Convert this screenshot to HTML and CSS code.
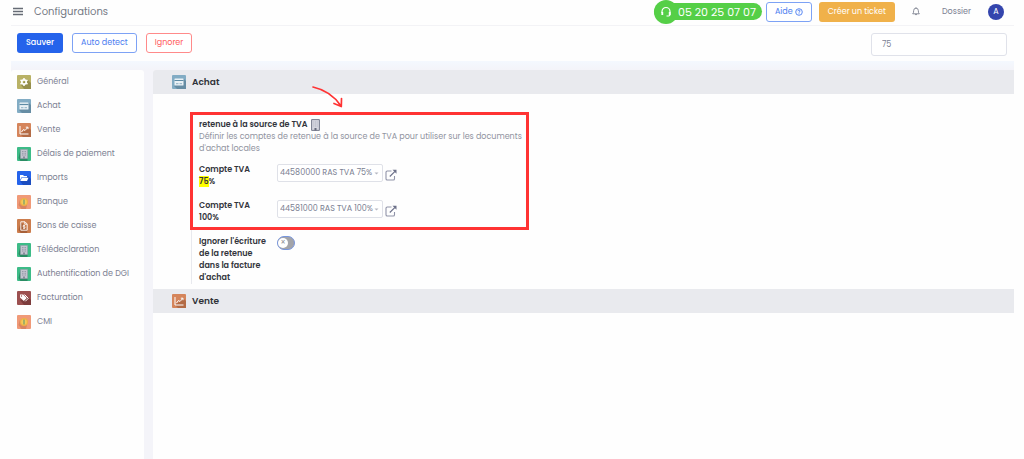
FILE: index.html
```
<!DOCTYPE html>
<html lang="fr">
<head>
    <meta charset="UTF-8">
    <meta name="viewport" content="width=device-width, initial-scale=1.0">
    <title>Configurations</title>
    <link rel="stylesheet" href="styles.css">
</head>
<body>
<!-- Shared icons -->
<svg class="sprite" aria-hidden="true">
    <symbol id="i-gear" viewBox="0 0 14 14">
        <rect width="14" height="14" rx="1" fill="#b9b266"/>
        <path d="M4 10 10 4l4 4v6H7z" fill="#968f4c"/>
        <circle cx="7" cy="7" r="2.200" fill="none" stroke="#fff" stroke-width="1.700"/>
        <path d="M7 3v1.500M7 9.500V11M3.500 5l1.300.8M9.200 8.200l1.300.8M3.500 9l1.300-.8M9.200 5.800l1.300-.8" stroke="#fff" stroke-width="1.500"/>
    </symbol>
    <symbol id="i-card" viewBox="0 0 14 14">
        <rect width="14" height="14" rx="1" fill="#82acc4"/>
        <path d="M2 11 12 4l2 2v8H5z" fill="#668da4"/>
        <rect x="2.500" y="3.500" width="9" height="7" rx=".5" fill="#e9f1f5"/>
        <path d="M2.500 5.500h9" stroke="#5d8ba5" stroke-width="1.200"/>
        <path d="M4 8.700h2.500M7.500 8.700h2.500" stroke="#8fb1c4"/>
    </symbol>
    <symbol id="i-chart" viewBox="0 0 14 14">
        <rect width="14" height="14" rx="1" fill="#d5855b"/>
        <path d="M3 11 11 4l3 3v7H6z" fill="#b36b45"/>
        <path d="M3 3v8h8.500M4.500 9l2-2.500 1.500 1 2.700-3M8.800 4.200h2.200v2" fill="none" stroke="#fff"/>
    </symbol>
    <symbol id="i-building" viewBox="0 0 14 14">
        <rect width="14" height="14" rx="1" fill="#3dbb87"/>
        <path d="M3.500 2.500 1.500 11l2 3h7V11.500z" fill="#2a8b63"/>
        <path d="M3.500 2.500h7v9h-7z" fill="#c3c4cf" stroke="#999cab" stroke-width=".6"/>
        <path d="M5 4.500h4M5 6.300h4M5 8h4" stroke="#8c90a0" stroke-width=".8" stroke-dasharray="1 .5"/>
        <path d="M6.200 9.500h1.600v2H6.200z" fill="#7a7e90"/>
    </symbol>
    <symbol id="i-folder" viewBox="0 0 14 14">
        <rect width="14" height="14" rx="1" fill="#2563eb"/>
        <path d="M3 10 11 5l3 3v6H6z" fill="#1b4dc0"/>
        <path d="M3 4h3l1 1h3v1.300H4.500L3 9z" fill="#fff"/>
        <path d="M4.800 6.800h6.700L10 10H3.300z" fill="#fff"/>
    </symbol>
    <symbol id="i-coin" viewBox="0 0 14 14">
        <rect width="14" height="14" rx="1" fill="#f09a78"/>
        <path d="M4 10 3 4.500 1.500 10l3 4H9l1-4z" fill="#d98562"/>
        <circle cx="7" cy="7" r="4" fill="#f0b045"/>
        <circle cx="7" cy="7" r="2.800" fill="#f5c95a"/>
        <path d="M7 4.500v5" stroke="#6f9f6c" stroke-width="1.200"/>
    </symbol>
    <symbol id="i-doc" viewBox="0 0 14 14">
        <rect width="14" height="14" rx="1" fill="#cc7d4d"/>
        <path d="M3.800 2.800 1.500 11l2.300 3h6.400v-3z" fill="#a76039"/>
        <path d="M3.800 2.800h4.200l2.200 2.200v6.200H3.800zM7.800 3v2.200H10" fill="none" stroke="#fff" stroke-width=".9"/>
        <path d="M8 6.500H6.200v1.400H8v1.400H6M7 5.700v4.200" fill="none" stroke="#fff" stroke-width=".7"/>
    </symbol>
    <symbol id="i-tag" viewBox="0 0 14 14">
        <rect width="14" height="14" rx="1" fill="#9c5050"/>
        <path d="M3 9 11 6l3 3v5H7z" fill="#7c3c3c"/>
        <path d="M3 3.500h3.200l3.600 3.600-3 3L3 6.500z" fill="#fff"/>
        <path d="m7.500 3.500 3.800 3.800-3 3" fill="none" stroke="#fff"/>
        <circle cx="4.500" cy="5" r=".7" fill="#9c5050"/>
    </symbol>
    <symbol id="i-external" viewBox="0 0 12 12">
        <path d="M6.500 2H2.300Q1 2 1 3.300v6.400Q1 11 2.300 11h6Q9.500 11 9.500 9.700V7" fill="none" stroke="#9093a8" stroke-width="1.100"/>
        <path d="M4.800 7.500 10 2.300" stroke="#6c7089" stroke-width="1.200"/>
        <path d="M7.500.7h4v4z" fill="#6c7089"/>
    </symbol>
</svg>

<div class="page">
    <header class="topbar">
        <button class="icon-btn" type="button" aria-label="Menu">
            <svg width="10" height="9" viewBox="0 0 10 9"><path d="M0 1.500h10M0 4.500h10M0 7.500h10" stroke="#666b75" stroke-width="1.500"/></svg>
        </button>
        <h1>Configurations</h1>
        <div class="topbar-right">
            <a class="phone" href="tel:0520250707">
                <span class="phone-icon">
                    <svg width="12" height="12" viewBox="0 0 12 12" fill="none" stroke="#fff" stroke-width="1.200"><path d="M2 7V5.500a4 4 0 0 1 8 0V8.500q0 1.500-1.500 1.500H6.500"/><path d="M2.300 6v3M9.700 6v3" stroke-width="1.800"/></svg>
                </span>
                05 20 25 07 07
            </a>
            <button class="btn btn-outline help" type="button">Aide
                <svg width="8" height="8" viewBox="0 0 8 8" fill="none" stroke="#4b7df0" stroke-width=".9"><circle cx="4" cy="4" r="3.300"/><path d="M2.900 3.200q.1-1.100 1.100-1.100 1.100 0 1.100.9 0 .6-1.100 1.200v.5M4 5.400v.8"/></svg>
            </button>
            <button class="btn btn-ticket" type="button">Créer un ticket</button>
            <button class="icon-btn bell" type="button" aria-label="Notifications">
                <svg width="8" height="9" viewBox="0 0 8 9" fill="none" stroke="#6b7080" stroke-width=".8"><path d="M.7 6.800Q1.700 6 1.700 3.500 1.700 1.200 4 1.200t2.300 2.300q0 2.500 1 3.300zM4 .3v.9M3.100 7.300q.9 1.300 1.800 0"/></svg>
            </button>
            <a class="dossier" href="#">Dossier</a>
            <button class="avatar" type="button">A</button>
        </div>
    </header>

    <div class="toolbar">
        <button class="btn btn-primary" type="button">Sauver</button>
        <button class="btn btn-outline" type="button">Auto detect</button>
        <button class="btn btn-danger" type="button">Ignorer</button>
        <input class="search" type="text" value="75" aria-label="Rechercher">
    </div>

    <div class="layout">
        <nav class="sidebar">
            <a href="#"><svg><use href="#i-gear"/></svg>Général</a>
            <a href="#achat"><svg><use href="#i-card"/></svg>Achat</a>
            <a href="#vente"><svg><use href="#i-chart"/></svg>Vente</a>
            <a href="#"><svg><use href="#i-building"/></svg>Délais de paiement</a>
            <a href="#"><svg><use href="#i-folder"/></svg>Imports</a>
            <a href="#"><svg><use href="#i-coin"/></svg>Banque</a>
            <a href="#"><svg><use href="#i-doc"/></svg>Bons de caisse</a>
            <a href="#"><svg><use href="#i-building"/></svg>Télédeclaration</a>
            <a href="#"><svg><use href="#i-building"/></svg>Authentification de DGI</a>
            <a href="#"><svg><use href="#i-tag"/></svg>Facturation</a>
            <a href="#"><svg><use href="#i-coin"/></svg>CMI</a>
        </nav>

        <main class="content">
            <h2 id="achat"><svg><use href="#i-card"/></svg>Achat</h2>
            <section class="group">
                <!-- Highlight frame and arrow -->
                <div class="frame"></div>
                <svg class="arrow" width="32" height="24" viewBox="0 0 32 24" fill="none" stroke="#ff3333" stroke-width="1.700" stroke-linecap="round" stroke-linejoin="round"><path d="M1 2q18 4 28 19M22 18.500l7.300 3 .2-8"/></svg>

                <h3>retenue à la source de TVA
                    <svg width="9" height="12" viewBox="0 0 9 12"><path d="M.6.600h7.800v10.800H.6z" fill="#d5d6df" stroke="#777b8d"/><path d="M2.300 3h4.400M2.300 5h4.400M2.300 7h4.400" stroke="#b2b5c3" stroke-dasharray="1 .7"/><path d="M3.500 9h2v2.400h-2z" fill="#666a7c"/></svg>
                </h3>
                <p>Définir les comptes de retenue à la source de TVA pour utiliser sur les documents d'achat locales</p>

                <div class="field">
                    <label for="compte75">Compte TVA <mark>75</mark>%</label>
                    <span class="select">
                        <select id="compte75"><option>44580000 RAS TVA 75%</option></select>
                        <svg width="5" height="3" viewBox="0 0 5 3"><path d="M.5.500h4l-2 2z" fill="#b5b8c2"/></svg>
                    </span>
                    <a class="open" href="#" aria-label="Ouvrir"><svg width="12" height="12"><use href="#i-external"/></svg></a>
                </div>
                <div class="field">
                    <label for="compte100">Compte TVA 100%</label>
                    <span class="select">
                        <select id="compte100"><option>44581000 RAS TVA 100%</option></select>
                        <svg width="5" height="3" viewBox="0 0 5 3"><path d="M.5.500h4l-2 2z" fill="#b5b8c2"/></svg>
                    </span>
                    <a class="open" href="#" aria-label="Ouvrir"><svg width="12" height="12"><use href="#i-external"/></svg></a>
                </div>
                <div class="field">
                    <label for="ignorer">Ignorer l'écriture de la retenue dans la facture d'achat</label>
                    <input class="switch" type="checkbox" id="ignorer">
                </div>
            </section>
            <h2 id="vente"><svg><use href="#i-chart"/></svg>Vente</h2>
        </main>
    </div>
</div>
</body>
</html>
```

FILE: styles.css
```
/* General Styles */
* {
    box-sizing: border-box;
}
body {
    margin: 0;
    background: #fefefe;
    color: #7b8092;
    font-family: Poppins, Inter, sans-serif;
    font-size: 8px;
    line-height: 12px;
}
h1, h2, h3, p {
    margin: 0;
}
a {
    color: inherit;
    text-decoration: none;
}
button, input, select {
    font: inherit;
    color: inherit;
}
button {
    padding: 0;
    border: none;
    background: none;
    cursor: pointer;
}
svg {
    flex: none;
}
.sprite {
    display: none;
}
.page {
    display: flex;
    flex-direction: column;
    min-height: 100vh;
    margin: 0 10px 0 11px;
}

/* Buttons */
.btn {
    height: 20px;
    padding: 0 8px;
    border: 1px solid transparent;
    border-radius: 3px;
}
.btn-primary {
    background: #2563eb;
    color: white;
    font-weight: 500;
}
.btn-outline {
    border-color: #7da2f5;
    background: white;
    color: #4b7df0;
}
.btn-danger {
    border-color: #ff8a8a;
    background: white;
    color: #ff5c5c;
}
.btn-ticket {
    background: #f0b14a;
    color: white;
}
.icon-btn {
    display: flex;
}

/* Top bar */
.topbar {
    display: flex;
    align-items: center;
    height: 26px;
    padding: 0 10px 2px 2px;
    border-bottom: 1px solid #f3f3f6;
}
.topbar h1 {
    margin-left: 11px;
    color: #747984;
    font-size: 10px;
    font-weight: 400;
}
.topbar-right {
    display: flex;
    align-items: center;
    margin-left: auto;
}
.phone {
    display: flex;
    align-items: center;
    height: 17px;
    margin-right: 4px;
    padding-right: 6px;
    border-radius: 9px;
    background: #55cf47;
    color: white;
    font-size: 11px;
}
.phone-icon {
    display: flex;
    align-items: center;
    justify-content: center;
    width: 24px;
    height: 24px;
    border-radius: 50%;
    background: #55cf47;
}
.help {
    display: flex;
    align-items: center;
    gap: 2px;
    margin-right: 7px;
}
.bell {
    margin: 0 22px 0 17px;
}
.dossier {
    margin-right: 17px;
}
.avatar {
    width: 16px;
    height: 16px;
    border-radius: 50%;
    background: #3445ad;
    color: white;
}

/* Toolbar */
.toolbar {
    display: flex;
    align-items: flex-start;
    gap: 9px;
    height: 35px;
    padding: 7px 7px 0 6px;
}
.search {
    width: 136px;
    height: 23px;
    margin-left: auto;
    padding: 0 10px;
    border: 1px solid #e0e2ea;
    border-radius: 3px;
    background: white;
}

/* Layout */
.layout {
    display: flex;
    flex: 1;
    gap: 9px;
    padding-top: 9px;
    background: linear-gradient(#f4f8fe, #f4f4f9 9px);
}
.sidebar {
    flex: none;
    width: 133px;
    border-radius: 3px 3px 0 0;
    background: #fefefe;
}
.sidebar a {
    display: flex;
    align-items: center;
    gap: 6px;
    height: 24px;
    padding-left: 6px;
}
.sidebar svg, h2 svg {
    width: 14px;
    height: 14px;
}
.content {
    flex: 1;
    border-radius: 3px 0 0 0;
    background: #fefefe;
    overflow: hidden;
}
h2 {
    display: flex;
    align-items: center;
    gap: 6px;
    height: 24px;
    padding-left: 19px;
    background: #e9eaee;
    color: #303238;
    font-size: 9px;
    font-weight: 600;
}

/* Settings group */
.group {
    position: relative;
    width: 338px;
    margin: 19px 0 5px 38px;
    padding: 6px 7px 0;
    border-left: 1px solid #e8e9ee;
}
.frame {
    position: absolute;
    inset: -1px 0 54px -2px;
    border: 3px solid #ff3333;
    pointer-events: none;
}
.arrow {
    position: absolute;
    top: -28px;
    left: 120px;
}
h3 {
    display: flex;
    align-items: center;
    gap: 4px;
    color: #33353c;
    font-size: 8px;
    font-weight: 600;
}
.group p {
    color: #90939f;
}
.field {
    display: flex;
    align-items: flex-start;
    margin-top: 12px;
}
.group p + .field {
    margin-top: 9px;
}
.field label {
    width: 68px;
    margin-right: 10px;
    color: #33353c;
    font-weight: 600;
}
mark {
    background: #ffff00;
    color: inherit;
}
.select {
    position: relative;
    width: 106px;
}
.select select {
    appearance: none;
    width: 100%;
    height: 18px;
    padding: 0 2px;
    border: 1px solid #dfe1e8;
    border-radius: 2px;
    background: white;
}
.select svg {
    position: absolute;
    top: 8px;
    right: 4px;
    pointer-events: none;
}
.open {
    display: flex;
    margin: 5px 0 0 2px;
}

/* Toggle */
.switch {
    appearance: none;
    display: flex;
    align-items: center;
    width: 18px;
    height: 14px;
    margin: 0;
    border: 1px solid #7795dd;
    border-radius: 7px;
    background: #a3a4a9;
}
.switch::before {
    content: "×";
    width: 10px;
    height: 10px;
    border-radius: 50%;
    background: white;
    color: #8e9096;
    line-height: 10px;
    text-align: center;
}
.switch:checked {
    justify-content: flex-end;
    background: #2563eb;
}
```
